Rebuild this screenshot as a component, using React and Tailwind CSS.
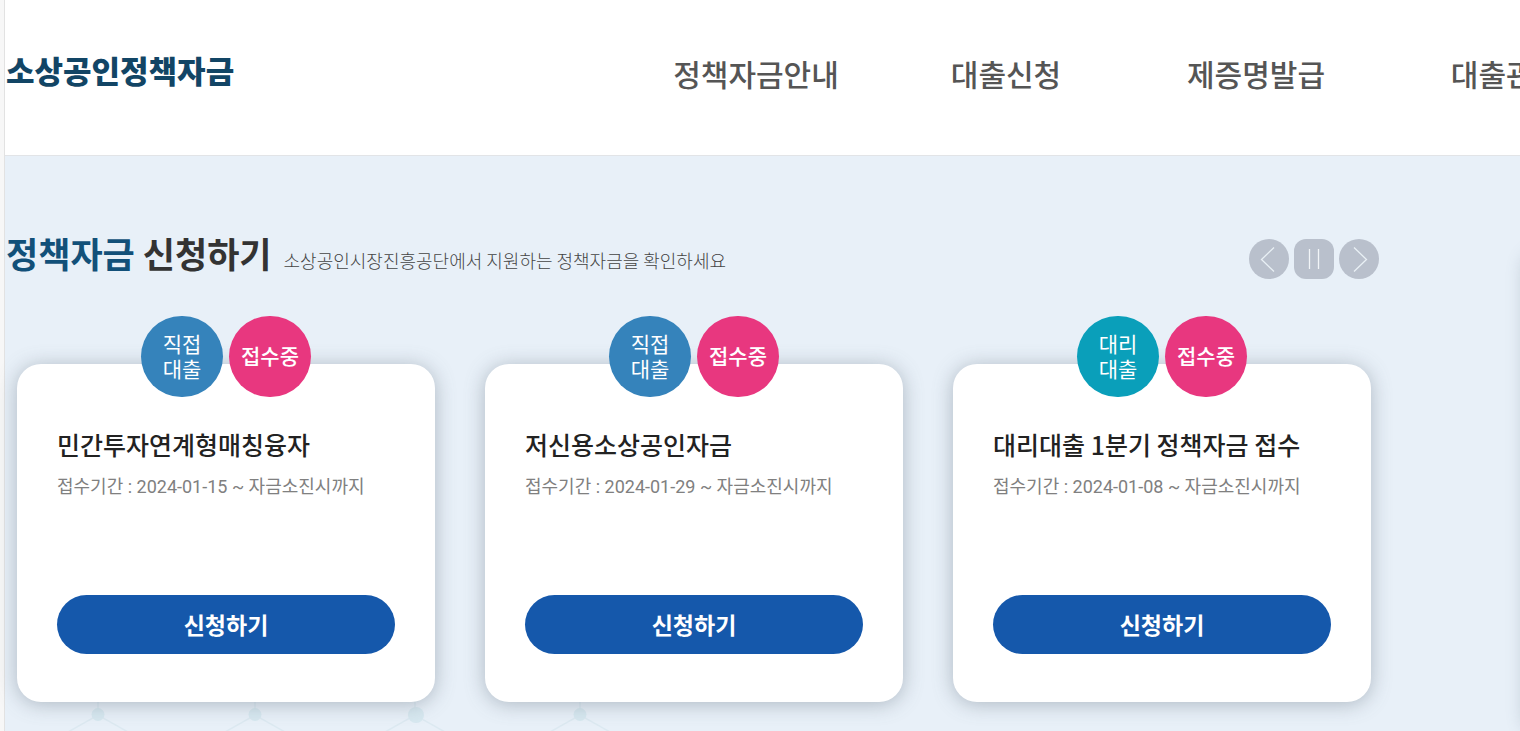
import { useState } from "react"

const menus = ["정책자금안내", "대출신청", "제증명발급", "대출관리"]

const funds = [
  { id: 1, type: ["직접", "대출"], agency: false, title: "민간투자연계형매칭융자", start: "2024-01-15" },
  { id: 2, type: ["직접", "대출"], agency: false, title: "저신용소상공인자금", start: "2024-01-29" },
  { id: 3, type: ["대리", "대출"], agency: true, title: "대리대출 1분기 정책자금 접수", start: "2024-01-08" },
]

const nodes = [93, 250, 410, 575]

const Header = () => (
  <header className="flex h-[156px] items-center overflow-hidden border-b border-[#e2e4e7] bg-white">
    <h1 className="min-w-[625px] flex-1 pb-4 pl-px">
      <a href="#" className="text-[31px] leading-10 font-black text-[#124565]">
        소상공인정책자금
      </a>
    </h1>
    <nav className="-mr-[111px] shrink-0 pb-2.5">
      <ul className="flex">
        {menus.map((menu) => (
          <li key={menu} className="w-[250px] text-center">
            <a href="#" className="text-[30px] leading-10 font-medium whitespace-nowrap text-[#555]">
              {menu}
            </a>
          </li>
        ))}
      </ul>
    </nav>
  </header>
)

const SlideControls = () => {
  const [paused, setPaused] = useState(false)

  return (
    <div className="flex gap-[5px]">
      <button type="button" aria-label="이전" className="size-10 rounded-full bg-[#b9c0cc]">
        <svg className="size-10" viewBox="0 0 40 40" fill="none" stroke="#e9f0f5" strokeWidth="1.3">
          <path d="M25 8.5 12.5 20.5 25 32.5" />
        </svg>
      </button>
      <button
        type="button"
        aria-label={paused ? "재생" : "정지"}
        onClick={() => setPaused(!paused)}
        className="size-10 rounded-xl bg-[#b9c0cc]"
      >
        <svg className="size-10" viewBox="0 0 40 40" fill="none" stroke="#f2f5f8" strokeWidth="1.3">
          {paused ? <path d="M14 10v20l14-10z" /> : <path d="M15.5 10v20M24.5 10v20" />}
        </svg>
      </button>
      <button type="button" aria-label="다음" className="size-10 rounded-full bg-[#b9c0cc]">
        <svg className="size-10" viewBox="0 0 40 40" fill="none" stroke="#e9f0f5" strokeWidth="1.3">
          <path d="M15 8.5 27.5 20.5 15 32.5" />
        </svg>
      </button>
    </div>
  )
}

const FundCard = ({ fund }) => (
  <li className="rounded-3xl bg-white px-10 pb-12 shadow-[0_2px_20px_rgba(90,105,120,0.42)]">
    <div className="-mt-12 flex justify-center gap-1.5 text-[21px] leading-[25px] text-white">
      <span
        className={`flex h-[81px] w-[82px] items-center justify-center rounded-full pb-0.5 text-center ${
          fund.agency ? "bg-[#0a9fba]" : "bg-[#3583bb]"
        }`}
      >
        <span>
          {fund.type[0]}
          <br />
          {fund.type[1]}
        </span>
      </span>
      <span className="flex h-[81px] w-[82px] items-center justify-center rounded-full bg-[#e8377f] pb-0.5 font-medium">
        접수중
      </span>
    </div>
    <h3 className="mt-[27px] text-[25px] leading-10 font-medium whitespace-nowrap text-[#222]">{fund.title}</h3>
    <p className="mt-[7px] font-[Roboto,'Noto_Sans_CJK_KR',sans-serif] text-lg leading-8 whitespace-nowrap text-[#808080]">
      접수기간 : {fund.start} ~ 자금소진시까지
    </p>
    <button
      type="button"
      className="mt-[92px] h-[59px] w-full rounded-full bg-[#1558ab] text-[23px] font-bold text-white hover:bg-[#104a93]"
    >
      신청하기
    </button>
  </li>
)

const App = () => {
  return (
    <div className="flex min-h-screen overflow-hidden bg-[#e8f0f8] font-['Noto_Sans_CJK_KR',sans-serif]">
      <div className="w-[5px] shrink-0 border-r border-[#e2e2e2] bg-[#f7f7f7]"></div>
      <div className="flex min-w-0 flex-1 flex-col">
        <Header />

        <main className="relative flex-1 pt-[71px] pb-[29px]">
          {/* Molecule pattern behind the cards */}
          <svg className="absolute bottom-0 left-0 h-10 w-[660px]" viewBox="0 0 660 40" fill="none" aria-hidden="true">
            {nodes.map((x) => (
              <g key={x}>
                <path d={`M${x} 0v23M${x - 30} 41 ${x} 24l30 17`} stroke="#dce9f1" strokeWidth="1.5" />
                <circle cx={x} cy="23.5" r="6.5" fill="#d7e8f0" />
                {x === 410 && <circle cx={x + 1} cy="24" r="8" fill="#d7e8f0" />}
              </g>
            ))}
          </svg>
          {/* Next panel, its edge shadow shows at the right side */}
          <div className="absolute top-[90px] bottom-0 left-full w-10 rounded-3xl bg-white shadow-[2px_4px_16px_rgba(90,110,130,0.25)]"></div>

          <div className="relative">
            <div className="flex items-center justify-between pr-[141px] pl-px">
              <div className="flex items-baseline gap-3 pb-3 whitespace-nowrap">
                <h2 className="text-[35px] leading-[52px] font-bold text-[#333]">
                  <span className="text-[#125079]">정책자금</span> 신청하기
                </h2>
                <p className="text-lg font-light text-[#444]">
                  소상공인시장진흥공단에서 지원하는 정책자금을 확인하세요
                </p>
              </div>
              <SlideControls />
            </div>
            <ul className="mt-[73px] grid grid-cols-3 gap-[50px] pr-[149px] pl-3">
              {funds.map((fund) => (
                <FundCard key={fund.id} fund={fund} />
              ))}
            </ul>
          </div>
        </main>
      </div>
    </div>
  )
}

export default App
